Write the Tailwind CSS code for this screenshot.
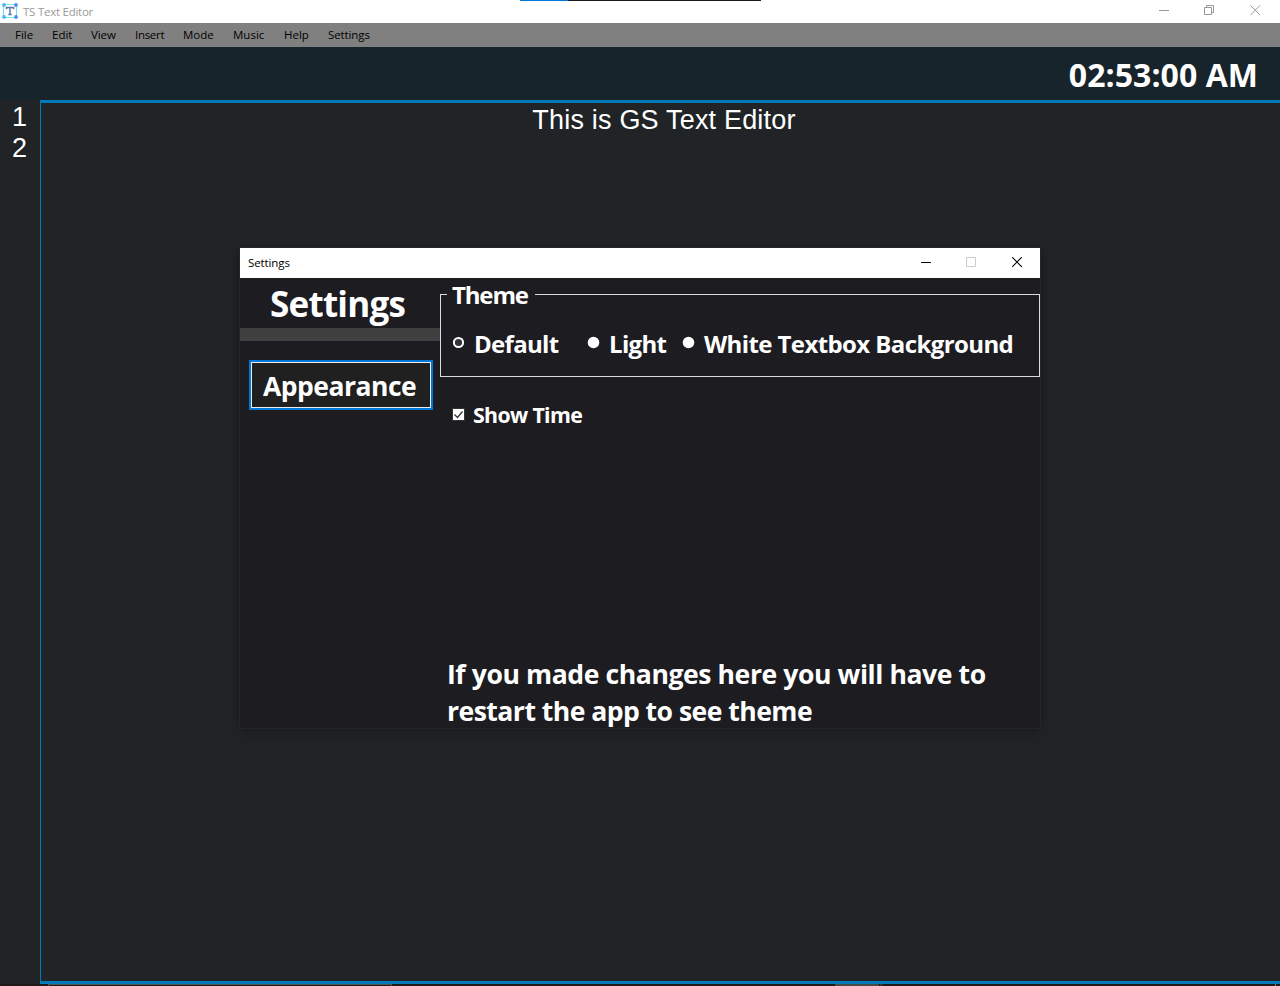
<!DOCTYPE html>
<html lang="en">
<head>
<meta charset="utf-8">
<title>TS Text Editor</title>
<script src="https://cdn.jsdelivr.net/npm/@tailwindcss/browser@4"></script>
</head>
<body class="h-[986px] w-[1280px] overflow-hidden bg-[#202427] font-['Open_Sans',sans-serif] text-white">
<div class="relative flex h-full flex-col">
  <div class="absolute left-[520px] top-0 flex h-px w-[241px] bg-[#1d1a1c]"><div class="w-12 bg-[#0078d7]"></div></div>

  <header class="flex h-[23px] shrink-0 items-center bg-white pl-[2px]">
    <svg class="mb-px size-4" viewBox="0 0 16 16" fill="none">
      <path d="M2 1.5h12M2 14.5h12M1.5 2v12M14.500 2v12" stroke="#69e2ef"/>
      <circle cx="2" cy="2" r="1.900" fill="#4cb9f8"/><circle cx="14" cy="2" r="1.900" fill="#4c8df8"/>
      <circle cx="2" cy="14" r="1.900" fill="#4cb9f8"/><circle cx="14" cy="14" r="1.900" fill="#4c8df8"/>
      <path d="M4.500 6.300V4.600h7v1.700M8 4.600v6.800M6.300 11.400h3.400" stroke="#6477a8" stroke-width="1.500"/>
    </svg>
    <h1 class="ml-[5px] text-[11.500px] leading-[23px] tracking-[-0.25px] whitespace-nowrap text-[#999]">TS Text Editor</h1>
    <div class="ml-auto flex pr-[19px] pb-[2px]">
      <svg class="mr-[34px] size-[11px]" viewBox="0 0 11 11"><path d="M0 5.500h10" stroke="#999"/></svg>
      <svg class="mr-[35px] size-[11px]" viewBox="0 0 11 11" fill="none" stroke="#999"><path d="M.5 2.500h7v7h-7zM2.500 2.500V.5h7v7h-2"/></svg>
      <svg class="size-[11px]" viewBox="0 0 11 11"><path d="M.5.5l9.500 9.500M10 .5l-9.500 9.500" stroke="#999"/></svg>
    </div>
  </header>

  <nav class="flex h-6 shrink-0 bg-[#808080] pl-[15px] text-[11.500px] leading-6 whitespace-nowrap text-black">
    <span class="w-[37px]">File</span><span class="w-[39px]">Edit</span><span class="w-11 tracking-[-0.1px]">View</span><span class="w-12 tracking-[-0.3px]">Insert</span><span class="w-[50px]">Mode</span><span class="w-[51px]">Music</span><span class="w-11">Help</span><span class="tracking-[-0.1px]">Settings</span>
  </nav>

  <div class="flex h-[53px] shrink-0 justify-end bg-[#18242b] pr-[22px] pt-[6px] text-[32px] leading-[44px] font-bold tracking-[0.05px] whitespace-nowrap">02:53:00 AM</div>

  <main class="flex h-[884px] shrink-0 font-['Liberation_Sans',sans-serif] text-[27px]">
    <div class="w-10 pl-[12px] pt-[2px] leading-[31px]"><div>1</div><div>2</div></div>
    <div class="flex-1 border-y-[3px] border-l border-[#007ab9] pt-[2px] pl-[7px] text-center leading-[30px] tracking-[0.19px]">This is GS Text Editor</div>
  </main>
  <footer class="flex h-[2px] shrink-0 bg-[#1d1c19]">
    <div class="ml-12 w-[344px] border border-b-0 border-[#555]"></div>
    <div class="ml-[443px] w-11 bg-[#4a4a48]"></div><div class="ml-px w-[3px] bg-[#333]"></div>
    <div class="ml-[392px] w-px bg-[#777]"></div>
  </footer>

  <section class="absolute left-[240px] top-[248px] h-[480px] w-[800px] bg-[#1d1c21] shadow-[0_2px_14px_rgba(0,0,0,0.35)] outline outline-[#262626]">
    <div class="flex h-[30px] items-center bg-white pl-2 text-[11.500px] text-black">
      <h2 class="leading-[30px] tracking-[-0.1px]">Settings</h2>
      <div class="ml-auto flex pr-[17px] pb-[2px]">
        <svg class="mr-[34px] size-[11px]" viewBox="0 0 11 11"><path d="M0 5.500h10" stroke="#000"/></svg>
        <svg class="mr-[35px] size-[11px]" viewBox="0 0 11 11" fill="none"><path d="M.5.5h9v9h-9z" stroke="#ccc"/></svg>
        <svg class="size-[11px]" viewBox="0 0 11 11"><path d="M.2.2l9.600 9.600M9.800.2l-9.600 9.600" stroke="#000" stroke-width="1.100"/></svg>
      </div>
    </div>
    <div class="flex h-[450px] font-bold whitespace-nowrap">
      <aside class="w-[200px]">
        <div class="h-[50px] pl-[30px] pt-[2px] text-[35px] leading-[48px] tracking-[-0.75px]">Settings</div>
        <div class="h-[13px] bg-[#404040]"></div>
        <div class="ml-[9px] mt-[19px] h-[50px] w-[184px] bg-[#0078d7] p-[2px]"><div class="h-full border border-[#eee] bg-[#202020] pl-[11px] text-[26.500px] leading-[47px] tracking-[-0.5px]">Appearance</div></div>
      </aside>
      <div class="w-[600px]">
        <div class="flex h-[33px] items-start text-[24px] leading-[34px]">
          <div class="mt-4 h-[17px] w-[7px] border-l border-t border-[#dcdcdc]"></div>
          <span class="w-[88px] pl-[5px] tracking-[-1.150px]">Theme</span>
          <div class="mt-4 h-[17px] flex-1 border-r border-t border-[#dcdcdc]"></div>
        </div>
        <div class="flex h-[66px] items-start border-x border-b border-[#dcdcdc] pl-[11px] pt-[16px] text-[24px] leading-[34px]">
          <svg class="mt-[9px] mr-[9px] size-[13px]" viewBox="0 0 13 13"><circle cx="6.500" cy="6.500" r="4.600" fill="#333" stroke="#fff" stroke-width="2"/></svg><span class="w-[113px] tracking-[-0.7px]">Default</span>
          <svg class="mt-[9px] mr-[9px] size-[13px]" viewBox="0 0 13 13"><circle cx="6.500" cy="6.500" r="5.800" fill="#fff"/></svg><span class="w-[73px] tracking-[-0.65px]">Light</span>
          <svg class="mt-[9px] mr-[9px] size-[13px]" viewBox="0 0 13 13"><circle cx="6.500" cy="6.500" r="5.800" fill="#fff"/></svg><span class="tracking-[-0.6px]">White Textbox Background</span>
        </div>
        <div class="flex h-[77px] items-start pl-3 pt-[22px] text-[21.300px] leading-8">
          <svg class="mt-[9px] mr-[8px] size-[13px]" viewBox="0 0 13 13" fill="none"><path d="M.5.5h12v12H.5z" fill="#fff" stroke="#333"/><path d="M2.500 6.500l3 3 5-6" stroke="#333" stroke-width="1.300"/></svg><span class="tracking-[-0.65px]">Show Time</span>
        </div>
        <div class="mt-[202px] pl-[7px] text-[26.600px] leading-[37px]"><p class="tracking-[-0.43px]">If you made changes here you will have to</p><p class="tracking-[-0.55px]">restart the app to see theme</p></div>
      </div>
    </div>
  </section>
</div>
</body>
</html>
